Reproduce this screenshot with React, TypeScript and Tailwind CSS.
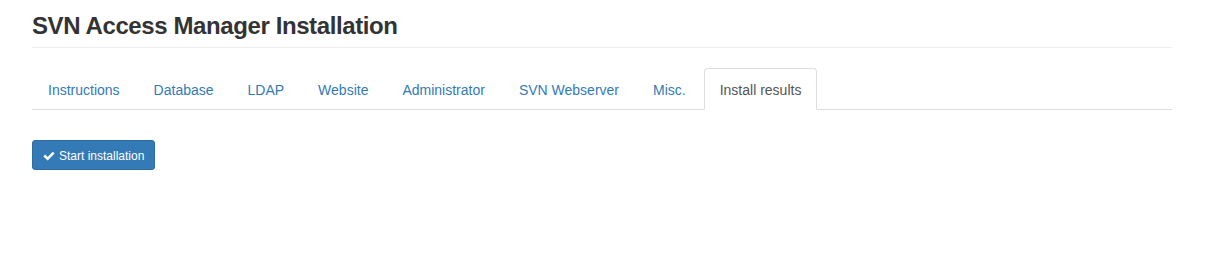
import { useState } from "react";

const tabs = [
  "Instructions",
  "Database",
  "LDAP",
  "Website",
  "Administrator",
  "SVN Webserver",
  "Misc.",
  "Install results",
];

function CheckIcon() {
  return (
    <svg viewBox="0 0 12 12" className="mr-[4px] h-[12px] w-[12px]" fill="currentColor">
      <path d="M0.4 6.4 L2.2 4.6 L4.6 7 L9.8 1.8 L11.6 3.6 L4.6 10.6 Z" />
    </svg>
  );
}

export default function App() {
  const [active, setActive] = useState("Install results");

  return (
    <div className="min-h-[262px] bg-white font-['Liberation_Sans',Arial,sans-serif] text-[14px] text-[#333]">
      <div className="mx-[32px] w-[1140px]">
        {/* Page header */}
        <div className="border-b border-[#eee] pb-[8px] pt-[13px]">
          <h1 className="text-[24px] font-bold leading-[1.1] tracking-[-0.4px] text-[#333]">
            SVN Access Manager Installation
          </h1>
        </div>

        {/* Tabs */}
        <ul className="mt-[20px] flex border-b border-[#ddd]">
          {tabs.map((tab) => (
            <li key={tab} className="-mb-px mr-[2px]">
              <a
                href="#"
                onClick={(e) => {
                  e.preventDefault();
                  setActive(tab);
                }}
                className={
                  tab === active
                    ? "block rounded-t-[4px] border border-[#ddd] border-b-transparent bg-white px-[15px] pb-[9px] pt-[11px] leading-[20px] text-[#555]"
                    : "block rounded-t-[4px] border border-transparent px-[15px] pb-[9px] pt-[11px] leading-[20px] text-[#337ab7] hover:bg-[#eee]"
                }
              >
                {tab}
              </a>
            </li>
          ))}
        </ul>

        {/* Tab content */}
        <div className="pt-[30px]">
          <button className="flex items-center rounded-[3px] border border-[#2e6da4] bg-[#337ab7] px-[10px] pb-[4px] pt-[6px] text-[12px] leading-[18px] text-white">
            <CheckIcon />
            Start installation
          </button>
        </div>
      </div>
    </div>
  );
}
